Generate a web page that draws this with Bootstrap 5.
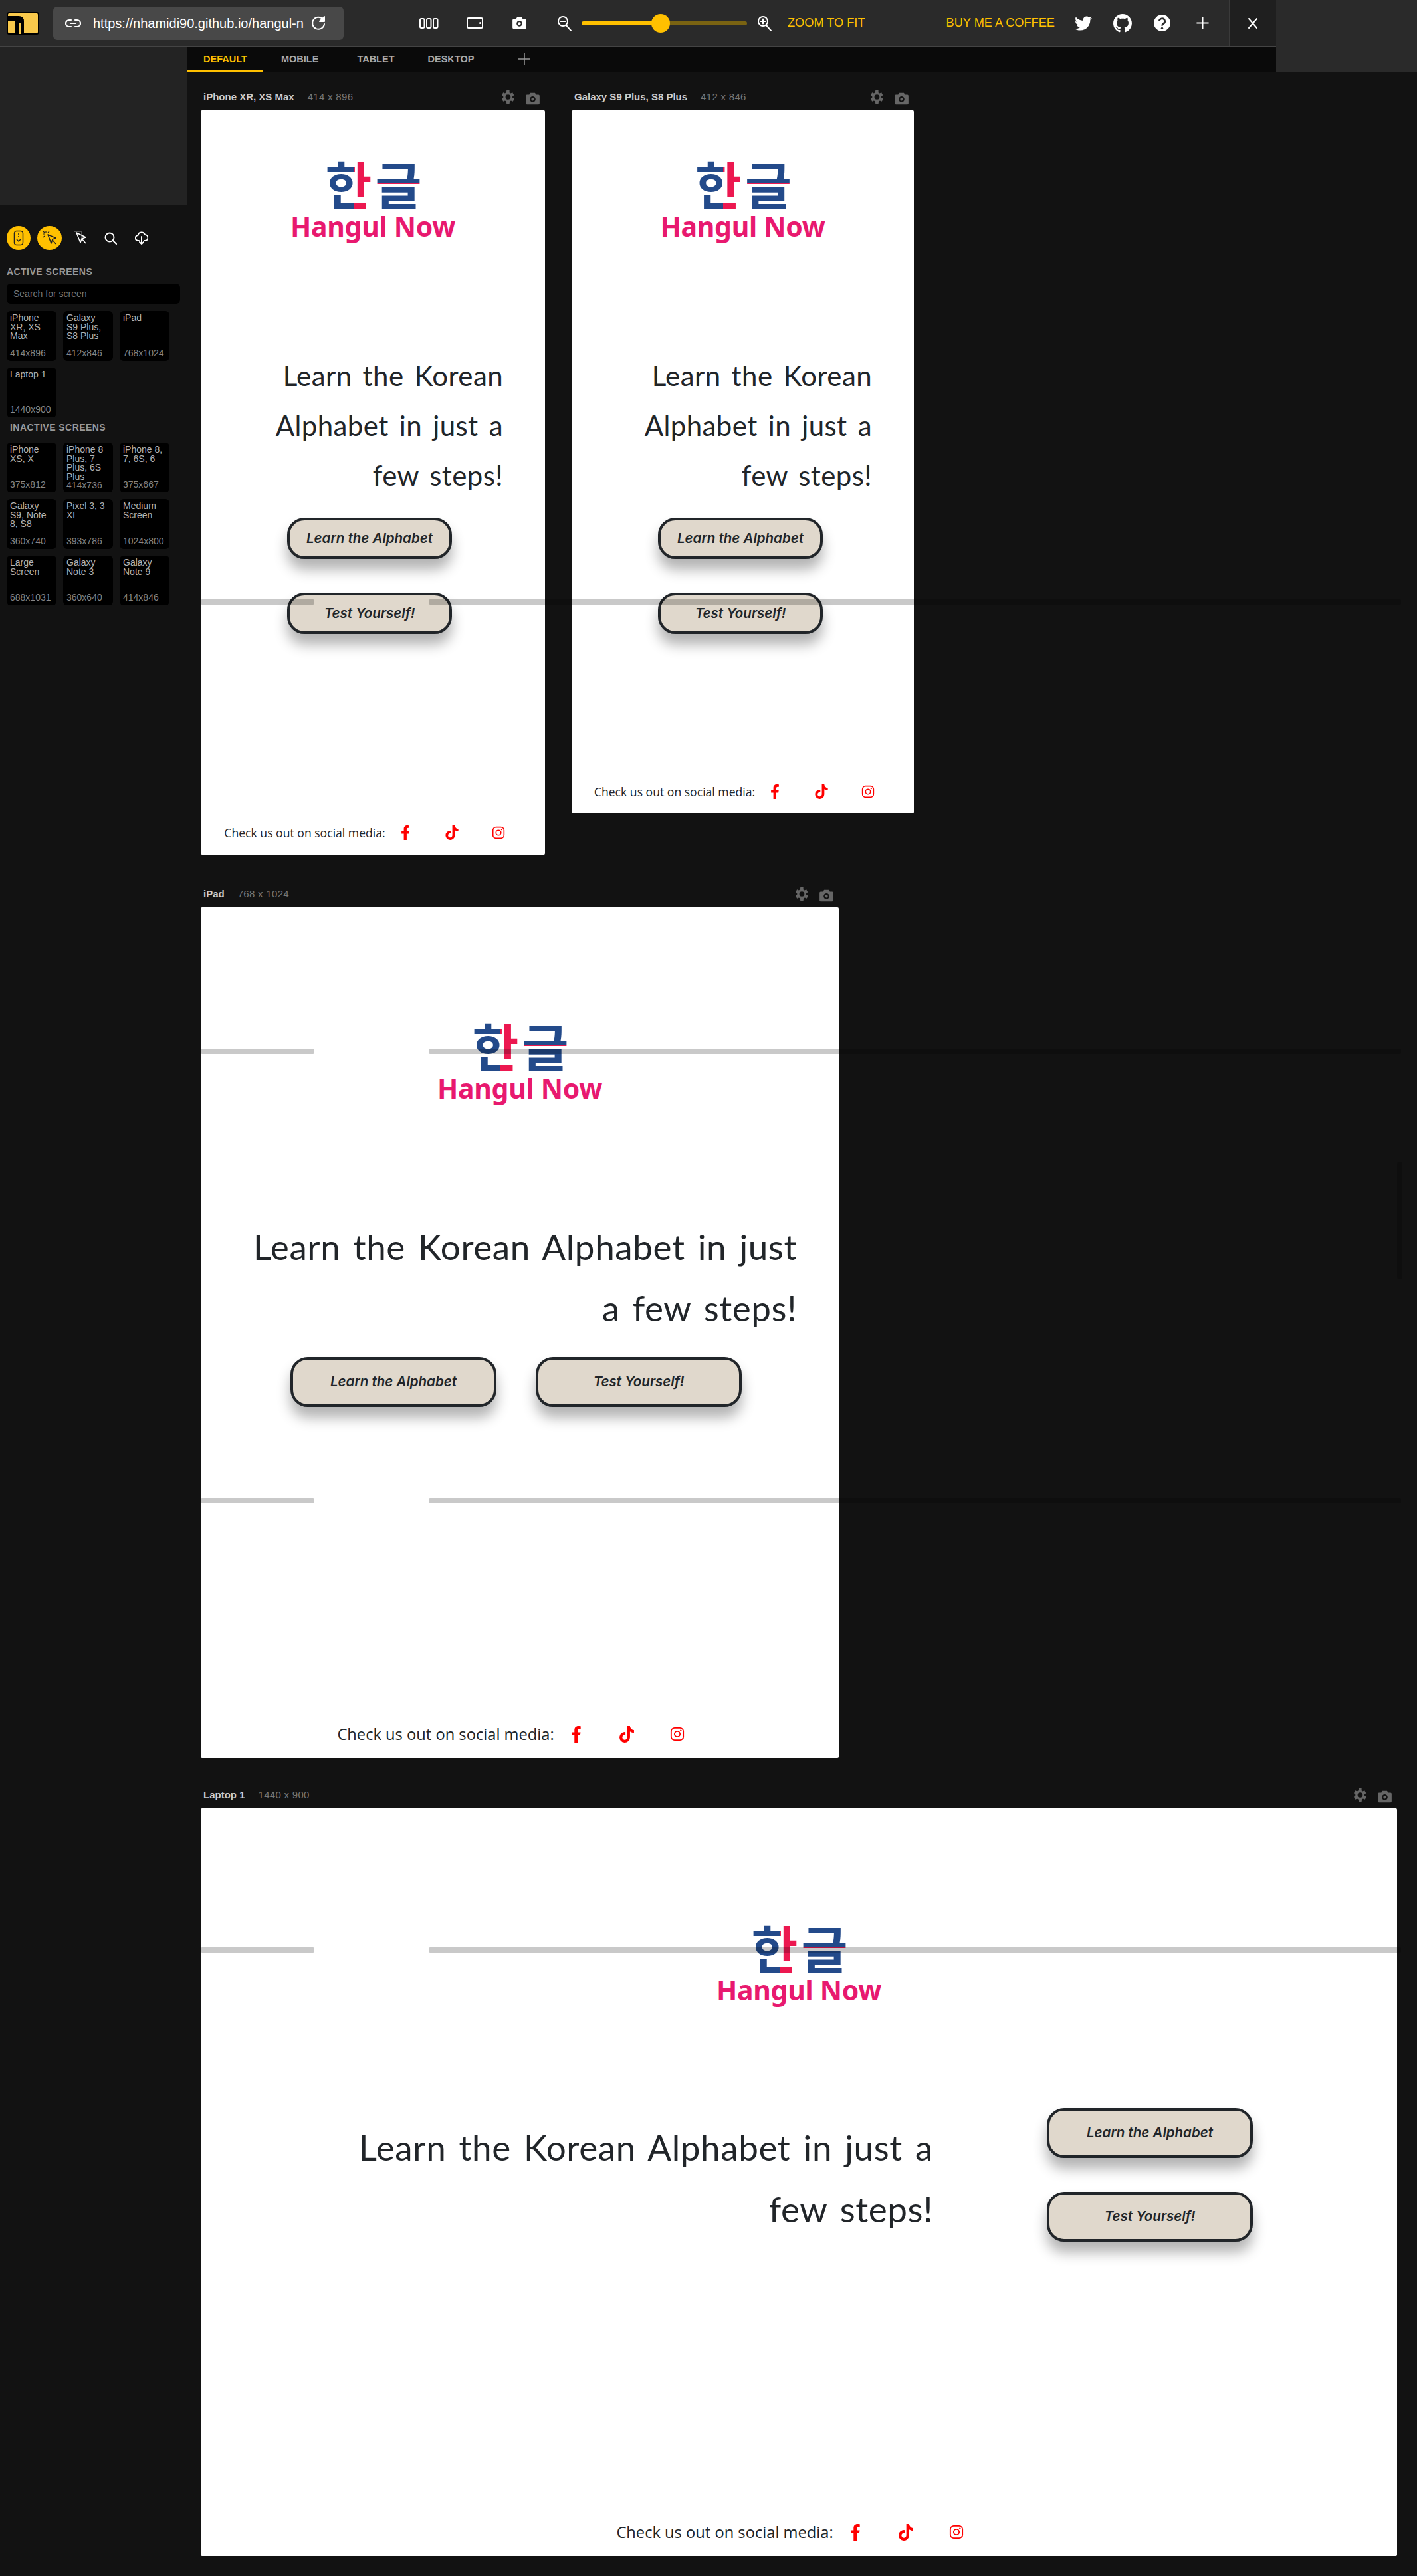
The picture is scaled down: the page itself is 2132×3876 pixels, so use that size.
<!doctype html>
<html lang="en">

<head>
  <meta charset="utf-8">
  <meta name="viewport" content="width=device-width, initial-scale=1">
  <title>Responsively - Hangul Now</title>
  <link href="https://cdn.jsdelivr.net/npm/bootstrap@5.3.0/dist/css/bootstrap.min.css" rel="stylesheet">

  <style>
    body {
      margin: 0;
      height: 3876px;
      overflow: hidden;
      position: relative;
      background: #121212;
      font-family: "Liberation Sans", Arial, sans-serif;
    }

    /* top toolbar */
    .top-wrap { background: #2a2a2a; height: 70px; }
    .top-bar {
      width: 1920px;
      height: 70px;
      border-bottom: 1px solid #444;
      color: #fff;
    }
    .app-logo { width: 49px; height: 34px; margin-left: 10px; }
    .url-box {
      width: 437px;
      height: 50px;
      margin-left: 21px;
      padding: 0 27px 0 18px;
      background: #484848;
      border-radius: 6px;
      font-size: 20px;
    }
    .url-text { width: 317px; margin-left: 18px; overflow: hidden; white-space: nowrap; }
    .ic-w { fill: #fff; }
    .ic-line { fill: none; stroke: #fff; stroke-width: 2; stroke-linecap: round; stroke-linejoin: round; }
    .tool-a { margin-left: 114px; }
    .zoom-track { width: 249px; height: 6px; margin: 0 15px; border-radius: 3px; position: relative;
      background: linear-gradient(to right, #ffc000 46%, #7a6312 46%); }
    .zoom-knob { position: absolute; left: 105px; top: -11px; width: 28px; height: 28px; border-radius: 50%; background: #ffc000; }
    .yellow-txt { color: #ffc000; font-size: 18.2px; white-space: nowrap; }
    .close-cell { width: 71px; height: 69px; background: #1f1f1f; border-left: 1px solid #3a3a3a; margin-left: auto; }

    /* sidebar */
    .side-col { width: 282px; flex: none; border-right: 1px solid #2e2e2e; }
    .side-top { height: 239px; background: #232323; }
    .side-body { padding: 31px 0 0 10px; }
    .round-btn { width: 36px; height: 36px; border-radius: 50%; background: #ffc000; }
    .side-lbl { font-size: 14px; line-height: 16px; font-weight: 700; color: #999; letter-spacing: .45px; }
    .search-screen.form-control {
      width: 261px;
      height: 30px;
      padding: 0 10px;
      margin-top: 10px;
      background: #000;
      border: 0;
      border-radius: 6px;
      font-size: 14px;
    }
    .search-screen::placeholder { color: #777; }
    .tile-grid { display: grid; grid-template-columns: repeat(3, 75px); gap: 10px; }
    .tile {
      height: 75px;
      padding: 4px 10px 4px 5px;
      background: #000;
      border-radius: 6px;
      color: #b4b4b4;
      font-size: 14px;
      line-height: 13.6px;
    }
    .tile span:last-child { color: #858585; white-space: nowrap; }

    /* tab strip */
    .tab-strip { height: 38px; width: 1638px; background: #0a0a0a; }
    .tab-right { height: 38px; flex: 1; background: #2a2a2a; }
    .tab-strip .nav-link {
      height: 38px;
      padding: 0;
      color: #aaa;
      font-size: 14.5px;
      font-weight: 700;
      line-height: 38px;
    }
    .tab-strip .nav-link.active { width: 113px; padding-left: 24px; color: #ffc000; border-bottom: 3px solid #ffc000; }

    /* device frames */
    .dev-head { height: 40px; font-size: 15px; }
    .dev-name { color: #ccc; font-weight: 700; }
    .dev-size { color: #777; margin-left: 20px; letter-spacing: .3px; }
    .dev-tools { margin-left: auto; margin-right: 8px; gap: 16px; fill: #666; }
    .stage { padding-left: 20px; }
    .scr { background: #fff; border-radius: 2px; color: #212529; }
    .scr-xr { width: 518px; height: 1120px; padding-top: 72px; }
    .scr-s9 { width: 515px; height: 1058px; padding-top: 72px; }
    .scr-ipad { width: 960px; height: 1280px; padding-top: 170px; }
    .scr-lap { width: 1800px; height: 1125px; padding-top: 171px; }
    .gap-s9 { margin-left: 40px; }

    .logo-ko {
      height: 76px;
      line-height: 74px;
      font-family: "Noto Sans CJK KR", sans-serif;
      font-size: 76px;
      font-weight: 700;
      display: flex;
      justify-content: center;
      gap: 7px;
    }
    .logo-ko span { display: block; width: 68px; -webkit-background-clip: text; background-clip: text; color: transparent; }
    .ko-han { background-image: linear-gradient(to right, #234a8a 62%, #ec1850 62%); }
    .ko-geul { background-image: linear-gradient(to bottom, #234a8a 49%, #ec1850 49%, #ec1850 57%, #234a8a 57%); }
    .logo-en {
      height: 53px;
      font-family: "Noto Sans", sans-serif;
      font-size: 41px;
      font-weight: 700;
      line-height: 53px;
      color: #e8196f;
      letter-spacing: -.3px;
    }

    .hero-txt {
      font-family: Lato, sans-serif;
      text-align: right;
      white-space: nowrap;
      color: #212529;
      word-spacing: 5px;
    }
    .hero-s { font-size: 42px; line-height: 75px; margin-top: 161px; padding-right: 63px; letter-spacing: .4px; }
    .hero-m { font-size: 53px; line-height: 92px; margin-top: 166px; padding-right: 63px; letter-spacing: .6px; }
    .hero-l { flex: 0 0 1102px; font-size: 53px; line-height: 93px; margin-top: 12px; letter-spacing: .6px; }

    .btn.btn-hangul {
      display: flex;
      align-items: center;
      justify-content: center;
      padding: 0;
      background: #e0d8cc;
      border: 4px solid #212529;
      border-radius: 26px;
      box-shadow: 0 16px 20px rgba(0, 0, 0, .3);
      color: #212529;
      font-family: Inter, sans-serif;
      font-size: 20.5px;
      font-style: italic;
      font-weight: 600;
    }
    .btn-s { width: 248px; height: 62px; }
    .btn-m { width: 310px; height: 75px; }
    .btn-stack-s { margin: 26px 0 0 130px; gap: 51px; }
    .btn-row-m { margin: 28px 0 0 135px; gap: 59px; }
    .lap-row { margin-top: 151px; gap: 171px; }
    .btn-stack-l { gap: 51px; }

    .foot-row { margin-top: auto; font-family: "Open Sans", sans-serif; color: #212529; }
    .foot-s { font-size: 17.6px; line-height: 30px; padding-bottom: 18px; }
    .foot-m { font-size: 23.7px; line-height: 36px; padding-bottom: 18px; }
    .foot-row .ic-wrap { display: flex; justify-content: center; fill: #f00; flex: none; }
    .foot-s .ic-wrap { width: 70px; }
    .foot-m .ic-wrap { width: 76px; }
    .foot-lead { margin-right: -5px; }
    .ic-insta { fill: none; stroke: #f00; stroke-width: 2; }

    /* guide bars that lie over the whole canvas */
    .over-bar { position: absolute; height: 8px; background: rgba(0, 0, 0, .21); border-radius: 2px; pointer-events: none; }
    .bar-a { left: 302px; width: 171px; }
    .bar-b { left: 645px; width: 1463px; }
    .y1 { top: 902px; }
    .y2 { top: 1578px; }
    .y3 { top: 2254px; }
    .y4 { top: 2930px; }
    .over-thumb { position: absolute; left: 2102px; top: 1748px; width: 8px; height: 177px; background: rgba(0, 0, 0, .21); border-radius: 4px; }
  </style>
</head>

<body>

  <svg width="0" height="0" class="position-absolute">
    <symbol id="i-gear" viewBox="3 2 20 20"><path d="M19.4 13a7.6 7.6 0 0 0 0-2l2.1-1.6-2-3.5-2.5 1a7.6 7.6 0 0 0-1.700-1L15.400 3h-4l-.4 2.900a7.600 7.600 0 0 0-1.700 1l-2.500-1-2 3.500L6.900 11a7.600 7.600 0 0 0 0 2l-2.100 1.600 2 3.500 2.500-1a7.600 7.600 0 0 0 1.700 1l.4 2.900h4l.4-2.900a7.600 7.600 0 0 0 1.700-1l2.500 1 2-3.500zM13.400 15.500a3.500 3.500 0 1 1 0-7 3.500 3.500 0 0 1 0 7z"/></symbol>
    <symbol id="i-cam" viewBox="0 0 24 22"><path d="M8 1 6 4H2a2 2 0 0 0-2 2v13a2 2 0 0 0 2 2h20a2 2 0 0 0 2-2V6a2 2 0 0 0-2-2h-4l-2-3zM12 17a5 5 0 1 1 0-10 5 5 0 0 1 0 10zm0-2.500a2.500 2.500 0 1 0 0-5 2.500 2.500 0 0 0 0 5z" fill-rule="evenodd"/></symbol>
    <symbol id="i-f" viewBox="0 0 320 512"><path d="M279.14 288l14.22-92.66h-88.91v-60.13c0-25.35 12.42-50.06 52.24-50.06h40.42V6.26S260.43 0 225.36 0c-73.22 0-121.08 44.38-121.08 124.72v70.62H22.89V288h81.39v224h100.17V288z"/></symbol>
    <symbol id="i-tt" viewBox="0 0 448 512"><path d="M448,209.91a210.06,210.06,0,0,1-122.77-39.25V349.38A162.55,162.55,0,1,1,185,188.31V278.2a74.62,74.62,0,1,0,52.23,71.18V0l88,0a121.18,121.18,0,0,0,1.86,22.17h0A122.18,122.18,0,0,0,381,102.39a121.43,121.43,0,0,0,67,20.14Z"/></symbol>
    <symbol id="i-ig" viewBox="0 0 24 24"><rect class="ic-insta" x="2" y="2" width="20" height="20" rx="5.500"/><circle class="ic-insta" cx="12" cy="12" r="4.500"/><circle cx="17.800" cy="6.200" r="1.300" fill="#f00"/></symbol>
  </svg>

  <div class="top-wrap">
    <div class="top-bar d-flex align-items-center">
      <svg class="app-logo" viewBox="0 0 49 34">
        <rect x="1" y="1" width="47" height="32" rx="3" fill="#f9c94b" stroke="#000" stroke-width="2"/>
        <path d="M2 6h16q8 0 8 8v19H13V17q0-4-4-4H2z" fill="#000"/>
        <path d="M19.500 33V17" fill="none" stroke="#f9c94b" stroke-width="3"/>
      </svg>
      <div class="url-box d-flex align-items-center">
        <svg width="24" height="24" viewBox="0 0 24 24" class="ic-line flex-none"><path d="M9 7H6a5 5 0 0 0 0 10h3M15 7h3a5 5 0 0 1 0 10h-3M8 12h8" stroke-width="2.200"/></svg>
        <div class="url-text">https://nhamidi90.github.io/hangul-now/</div>
        <svg width="22" height="24" viewBox="0 0 22 24" class="ms-auto ic-line"><path d="M18 6a9 9 0 1 0 2 7"/><path class="ic-w" d="M20 2v7h-7z"/></svg>
      </div>

      <svg class="tool-a ic-line" width="29" height="16" viewBox="0 0 29 16"><rect x="1" y="1" width="6.500" height="14" rx="2"/><rect x="11" y="1" width="6.500" height="14" rx="2"/><rect x="21" y="1" width="6.500" height="14" rx="2"/></svg>
      <svg class="ic-line" style="margin-left:42px" width="25" height="17" viewBox="0 0 25 17"><rect x="1" y="1" width="23" height="15" rx="2"/><circle class="ic-w" cx="20.500" cy="8.500" r=".6"/></svg>
      <svg class="ic-w" style="margin-left:44px" width="21" height="19"><use href="#i-cam"/></svg>
      <svg class="ic-line" style="margin-left:46px" width="22" height="24" viewBox="0 0 22 24"><circle cx="9" cy="9" r="7"/><path d="M14 15l7 8M5.500 9h7"/></svg>
      <div class="zoom-track"><div class="zoom-knob"></div></div>
      <svg class="ic-line" width="22" height="24" viewBox="0 0 22 24"><circle cx="9" cy="9" r="7"/><path d="M14 15l7 8M5.500 9h7M9 5.500v7"/></svg>
      <span class="yellow-txt" style="margin-left:24px">ZOOM TO FIT</span>
      <span class="yellow-txt" style="margin-left:122px">BUY ME A COFFEE</span>
      <svg class="ic-w" style="margin-left:30px" width="26" height="26" viewBox="0 0 512 512"><path d="M459.37 151.716c.325 4.548.325 9.097.325 13.645 0 138.72-105.583 298.558-298.558 298.558-59.452 0-114.68-17.219-161.137-47.106 8.447.974 16.568 1.299 25.34 1.299 49.055 0 94.213-16.568 130.274-44.832-46.132-.975-84.792-31.188-98.112-72.772 6.498.974 12.995 1.624 19.818 1.624 9.421 0 18.843-1.3 27.614-3.573-48.081-9.747-84.143-51.98-84.143-102.985v-1.299c13.969 7.797 30.214 12.67 47.431 13.319-28.264-18.843-46.781-51.005-46.781-87.391 0-19.492 5.197-37.36 14.294-52.954 51.655 63.675 129.3 105.258 216.365 109.807-1.624-7.797-2.599-15.918-2.599-24.04 0-57.828 46.782-104.934 104.934-104.934 30.213 0 57.502 12.67 76.67 33.137 23.715-4.548 46.456-13.32 66.599-25.34-7.798 24.366-24.366 44.833-46.132 57.827 21.117-2.273 41.584-8.122 60.426-16.243-14.292 20.791-32.161 39.308-52.628 54.253z"/></svg>
      <svg class="ic-w" style="margin-left:32px" width="28" height="28" viewBox="0 0 16 16"><path d="M8 0C3.58 0 0 3.58 0 8c0 3.54 2.29 6.53 5.47 7.59.4.07.55-.17.55-.38 0-.19-.01-.82-.01-1.49-2.01.37-2.53-.49-2.69-.94-.09-.23-.48-.94-.82-1.13-.28-.15-.68-.52-.01-.53.63-.01 1.08.58 1.23.82.72 1.21 1.87.87 2.33.66.07-.52.28-.87.51-1.07-1.78-.2-3.64-.89-3.64-3.95 0-.87.31-1.59.82-2.15-.08-.2-.36-1.02.08-2.12 0 0 .67-.21 2.2.82.64-.18 1.32-.27 2-.27.68 0 1.36.09 2 .27 1.53-1.04 2.2-.82 2.2-.82.44 1.1.16 1.92.08 2.12.51.56.82 1.27.82 2.15 0 3.07-1.87 3.75-3.65 3.95.29.25.54.73.54 1.48 0 1.07-.01 1.93-.01 2.2 0 .21.15.46.55.38A8.012 8.012 0 0 0 16 8c0-4.42-3.58-8-8-8z"/></svg>
      <svg style="margin-left:33px" width="25" height="25" viewBox="0 0 24 24"><circle cx="12" cy="12" r="12" fill="#fff"/><path d="M8 9.500a4 4 0 1 1 6 3.400c-1.500.9-2 1.500-2 3" fill="none" stroke="#2a2a2a" stroke-width="2.600"/><circle cx="12" cy="19.500" r="1.600" fill="#2a2a2a"/></svg>
      <svg class="ic-line" style="margin-left:39px" width="19" height="19" viewBox="0 0 19 19"><path d="M9.500 1v17M1 9.500h17"/></svg>
      <div class="close-cell d-flex align-items-center justify-content-center">
        <svg class="ic-line" width="18" height="18" viewBox="0 0 18 18"><path d="M3 2l12 14M15 2L3 16"/></svg>
      </div>
    </div>
  </div>

  <div class="d-flex">
    <aside class="side-col align-self-start">
      <div class="side-top"></div>
      <div class="side-body">
        <div class="d-flex align-items-center">
          <div class="round-btn d-flex align-items-center justify-content-center">
            <svg width="16" height="24" viewBox="0 0 16 24" fill="none" stroke="#222" stroke-width="1.500"><rect x="1.500" y="1.500" width="13" height="21" rx="3.500"/><path d="M8 5v7" stroke-dasharray="2 2"/><path d="M5 14l3 3 3-3"/></svg>
          </div>
          <div class="round-btn d-flex align-items-center justify-content-center" style="margin-left:10px;width:37px">
            <svg width="24" height="24" viewBox="0 0 24 24" fill="none" stroke="#222" stroke-width="1.500"><path d="M9 7l12 5-5 2-2 6z" stroke-linejoin="round"/><path d="M16 15l5 6M6 1v3M1 6h3M2 2l2 2M2 11l2-2M11 2L9 4" stroke-width="1.200"/></svg>
          </div>
          <svg style="margin-left:18px" width="20" height="20" viewBox="0 0 20 20" fill="none"><rect x=".5" y=".5" width="11" height="11" stroke="#555"/><path d="M4 2l14 7-6 2-2 6zM12 11l6 7" stroke="#fff" stroke-width="1.500" stroke-linejoin="round"/></svg>
          <svg class="ic-line" style="margin-left:26px" width="19" height="19" viewBox="0 0 19 19"><circle cx="8" cy="8" r="6.500"/><path d="M13 13l5 5"/></svg>
          <svg class="ic-line" style="margin-left:27px" width="20" height="20" viewBox="0 0 20 20"><path d="M6 14H5a4 4 0 0 1-.5-8A5.500 5.500 0 0 1 15 5a4.500 4.500 0 0 1 0 9h-1M10 8v11M7 16l3 3 3-3"/></svg>
        </div>

        <div class="side-lbl" style="margin-top:25px">ACTIVE SCREENS</div>
        <input class="form-control search-screen" type="text" placeholder="Search for screen">
        <div class="tile-grid" style="margin-top:11px">
          <div class="tile d-flex flex-column justify-content-between"><span>iPhone XR, XS Max</span><span>414x896</span></div>
          <div class="tile d-flex flex-column justify-content-between"><span>Galaxy S9 Plus, S8 Plus</span><span>412x846</span></div>
          <div class="tile d-flex flex-column justify-content-between"><span>iPad</span><span>768x1024</span></div>
          <div class="tile d-flex flex-column justify-content-between"><span>Laptop 1</span><span>1440x900</span></div>
        </div>

        <div class="side-lbl" style="margin:7px 0 15px 5px">INACTIVE SCREENS</div>
        <div class="tile-grid">
          <div class="tile d-flex flex-column justify-content-between"><span>iPhone XS, X</span><span>375x812</span></div>
          <div class="tile d-flex flex-column justify-content-between"><span>iPhone 8 Plus, 7 Plus, 6S Plus</span><span>414x736</span></div>
          <div class="tile d-flex flex-column justify-content-between"><span>iPhone 8, 7, 6S, 6</span><span>375x667</span></div>
          <div class="tile d-flex flex-column justify-content-between"><span>Galaxy S9, Note 8, S8</span><span>360x740</span></div>
          <div class="tile d-flex flex-column justify-content-between"><span>Pixel 3, 3 XL</span><span>393x786</span></div>
          <div class="tile d-flex flex-column justify-content-between"><span>Medium Screen</span><span>1024x800</span></div>
          <div class="tile d-flex flex-column justify-content-between"><span>Large Screen</span><span>688x1031</span></div>
          <div class="tile d-flex flex-column justify-content-between"><span>Galaxy Note 3</span><span>360x640</span></div>
          <div class="tile d-flex flex-column justify-content-between"><span>Galaxy Note 9</span><span>414x846</span></div>
        </div>
      </div>
    </aside>

    <main class="flex-grow-1">
      <div class="d-flex">
        <ul class="nav tab-strip align-items-start">
          <li class="nav-item"><a class="nav-link active" href="#">DEFAULT</a></li>
          <li class="nav-item" style="margin-left:28px"><a class="nav-link" href="#">MOBILE</a></li>
          <li class="nav-item" style="margin-left:58px"><a class="nav-link" href="#">TABLET</a></li>
          <li class="nav-item" style="margin-left:50px"><a class="nav-link" href="#">DESKTOP</a></li>
          <li class="nav-item d-flex align-items-center" style="margin-left:67px;height:38px">
            <svg width="18" height="18" viewBox="0 0 18 18" fill="none" stroke="#999" stroke-width="1.500"><path d="M9 0v18M0 9h18"/></svg>
          </li>
        </ul>
        <div class="tab-right"></div>
      </div>

      <div class="stage">
        <div class="d-flex align-items-start" style="padding-top:18px">
          <section>
            <div class="dev-head d-flex align-items-center ps-1">
              <span class="dev-name">iPhone XR, XS Max</span><span class="dev-size">414 x 896</span>
              <div class="dev-tools d-flex"><svg width="22" height="22"><use href="#i-gear"/></svg><svg width="21" height="19" class="mt-1"><use href="#i-cam"/></svg></div>
            </div>
            <div class="scr scr-xr d-flex flex-column">
              <div class="text-center">
                <div class="logo-ko"><span class="ko-han">한</span><span class="ko-geul">글</span></div>
                <div class="logo-en">Hangul Now</div>
              </div>
              <div class="hero-txt hero-s">Learn the Korean<br>Alphabet in just a<br>few steps!</div>
              <div class="d-flex flex-column btn-stack-s">
                <a class="btn btn-hangul btn-s" href="#">Learn the Alphabet</a>
                <a class="btn btn-hangul btn-s" href="#">Test Yourself!</a>
              </div>
              <div class="foot-row foot-s d-flex justify-content-center align-items-center">
                <span class="foot-lead">Check us out on social media:</span>
                <span class="ic-wrap"><svg width="16" height="22"><use href="#i-f"/></svg></span>
                <span class="ic-wrap"><svg width="20" height="22"><use href="#i-tt"/></svg></span>
                <span class="ic-wrap"><svg width="20" height="20"><use href="#i-ig"/></svg></span>
              </div>
            </div>
          </section>

          <section class="gap-s9">
            <div class="dev-head d-flex align-items-center ps-1">
              <span class="dev-name">Galaxy S9 Plus, S8 Plus</span><span class="dev-size">412 x 846</span>
              <div class="dev-tools d-flex"><svg width="22" height="22"><use href="#i-gear"/></svg><svg width="21" height="19" class="mt-1"><use href="#i-cam"/></svg></div>
            </div>
            <div class="scr scr-s9 d-flex flex-column">
              <div class="text-center">
                <div class="logo-ko"><span class="ko-han">한</span><span class="ko-geul">글</span></div>
                <div class="logo-en">Hangul Now</div>
              </div>
              <div class="hero-txt hero-s">Learn the Korean<br>Alphabet in just a<br>few steps!</div>
              <div class="d-flex flex-column btn-stack-s">
                <a class="btn btn-hangul btn-s" href="#">Learn the Alphabet</a>
                <a class="btn btn-hangul btn-s" href="#">Test Yourself!</a>
              </div>
              <div class="foot-row foot-s d-flex justify-content-center align-items-center">
                <span class="foot-lead">Check us out on social media:</span>
                <span class="ic-wrap"><svg width="16" height="22"><use href="#i-f"/></svg></span>
                <span class="ic-wrap"><svg width="20" height="22"><use href="#i-tt"/></svg></span>
                <span class="ic-wrap"><svg width="20" height="20"><use href="#i-ig"/></svg></span>
              </div>
            </div>
          </section>
        </div>

        <section style="margin-top:39px">
          <div class="dev-head d-flex align-items-center ps-1" style="width:960px">
            <span class="dev-name">iPad</span><span class="dev-size">768 x 1024</span>
            <div class="dev-tools d-flex"><svg width="22" height="22"><use href="#i-gear"/></svg><svg width="21" height="19" class="mt-1"><use href="#i-cam"/></svg></div>
          </div>
          <div class="scr scr-ipad d-flex flex-column">
            <div class="text-center">
              <div class="logo-ko"><span class="ko-han">한</span><span class="ko-geul">글</span></div>
              <div class="logo-en">Hangul Now</div>
            </div>
            <div class="hero-txt hero-m">Learn the Korean Alphabet in just<br>a few steps!</div>
            <div class="d-flex btn-row-m">
              <a class="btn btn-hangul btn-m" href="#">Learn the Alphabet</a>
              <a class="btn btn-hangul btn-m" href="#">Test Yourself!</a>
            </div>
            <div class="foot-row foot-m d-flex justify-content-center align-items-center">
              <span class="foot-lead">Check us out on social media:</span>
              <span class="ic-wrap"><svg width="16" height="25"><use href="#i-f"/></svg></span>
              <span class="ic-wrap"><svg width="22" height="25"><use href="#i-tt"/></svg></span>
              <span class="ic-wrap"><svg width="22" height="22"><use href="#i-ig"/></svg></span>
            </div>
          </div>
        </section>

        <section style="margin-top:36px">
          <div class="dev-head d-flex align-items-center ps-1" style="width:1800px">
            <span class="dev-name">Laptop 1</span><span class="dev-size">1440 x 900</span>
            <div class="dev-tools d-flex"><svg width="22" height="22"><use href="#i-gear"/></svg><svg width="21" height="19" class="mt-1"><use href="#i-cam"/></svg></div>
          </div>
          <div class="scr scr-lap d-flex flex-column">
            <div class="text-center">
              <div class="logo-ko"><span class="ko-han">한</span><span class="ko-geul">글</span></div>
              <div class="logo-en">Hangul Now</div>
            </div>
            <div class="d-flex align-items-start lap-row">
              <div class="hero-txt hero-l">Learn the Korean Alphabet in just a<br>few steps!</div>
              <div class="d-flex flex-column btn-stack-l">
                <a class="btn btn-hangul btn-m" href="#">Learn the Alphabet</a>
                <a class="btn btn-hangul btn-m" href="#">Test Yourself!</a>
              </div>
            </div>
            <div class="foot-row foot-m d-flex justify-content-center align-items-center">
              <span class="foot-lead">Check us out on social media:</span>
              <span class="ic-wrap"><svg width="16" height="25"><use href="#i-f"/></svg></span>
              <span class="ic-wrap"><svg width="22" height="25"><use href="#i-tt"/></svg></span>
              <span class="ic-wrap"><svg width="22" height="22"><use href="#i-ig"/></svg></span>
            </div>
          </div>
        </section>
      </div>
    </main>
  </div>

  <div class="over-bar bar-a y1"></div><div class="over-bar bar-b y1"></div>
  <div class="over-bar bar-a y2"></div><div class="over-bar bar-b y2"></div>
  <div class="over-bar bar-a y3"></div><div class="over-bar bar-b y3"></div>
  <div class="over-bar bar-a y4"></div><div class="over-bar bar-b y4"></div>
  <div class="over-thumb"></div>

  <script src="https://cdn.jsdelivr.net/npm/bootstrap@5.3.0/dist/js/bootstrap.bundle.min.js"></script>

</body>

</html>
